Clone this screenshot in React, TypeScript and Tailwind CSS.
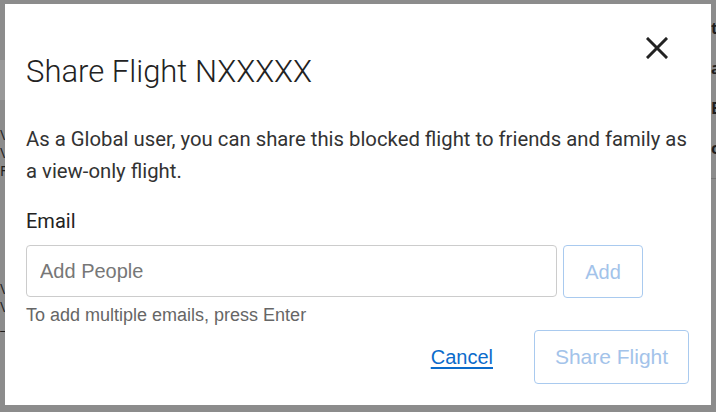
const roboto = { fontFamily: "Roboto, 'Liberation Sans', sans-serif" };
const helv = { fontFamily: "'Liberation Sans', Arial, sans-serif" };

function BackgroundPage() {
  return (
    <div className="flex h-[412px] w-[716px] bg-[#8c8c8c] text-[#1e1e1e]">
      <div className="flex w-[5px] flex-col overflow-hidden pt-[60px]">
        <div className="h-[40px] bg-[#999999]" />
        <div className="mt-[26px] text-[14px] leading-[18px]">\</div>
        <div className="text-[14px] leading-[18px]">\</div>
        <div className="text-[14px] leading-[18px]">F</div>
        <div className="mt-[100px] text-[14px] leading-[18px]">\</div>
        <div className="text-[14px] leading-[18px]">\</div>
        <div className="text-[14px] leading-[18px]">_</div>
      </div>
      <div className="flex-1" />
      <div className="flex w-[5px] flex-col overflow-hidden pt-[8px] text-[16px] font-bold leading-[40px]">
        <span>t</span>
        <span>a</span>
        <span>E</span>
        <span>c</span>
        <div className="mt-[10px] border-t border-[#777]" />
      </div>
    </div>
  );
}

function ShareFlightModal() {
  return (
    <div className="absolute left-[5px] top-[4px] h-[401px] w-[706px] bg-white px-[21px]">
      <div className="flex items-start justify-between">
        <h2 className="mt-[48px] text-[31px] font-light leading-[40px] text-[#222]" style={roboto}>
          Share Flight NXXXXX
        </h2>
        <button className="mr-[22px] mt-[33px] text-[#222]" aria-label="Close">
          <svg width="22" height="22" viewBox="0 0 22 22" fill="none" stroke="currentColor" strokeWidth="3" strokeLinecap="square">
            <path d="M2 2 L20 20 M20 2 L2 20" />
          </svg>
        </button>
      </div>

      <p className="mt-[31px] text-[20.3px] leading-[32px] text-[#333]" style={roboto}>
        As a Global user, you can share this blocked flight to friends and family as a view-only flight.
      </p>

      <label className="mt-[20px] block text-[20px] leading-[28px] text-[#222]" style={roboto}>
        Email
      </label>

      <div className="mt-[10px] flex gap-[6px]">
        <input
          placeholder="Add People"
          className="h-[52px] w-[531px] rounded-[4px] border border-[#cccccc] px-[13px] text-[20px] text-[#333] placeholder:text-[#777] outline-none"
          style={helv}
        />
        <button className="h-[53px] w-[80px] rounded-[4px] border border-[#a9caef] text-[20px] text-[#a3c3ea]" style={helv}>
          Add
        </button>
      </div>

      <p className="mt-[5px] text-[18px] leading-[24px] text-[#666]" style={helv}>
        To add multiple emails, press Enter
      </p>

      <div className="mt-[3px] flex items-center justify-end gap-[41px] pr-[1px]" style={helv}>
        <a href="#" className="text-[20px] text-[#0b6bcb] underline underline-offset-[3px]">
          Cancel
        </a>
        <button className="h-[54px] w-[155px] rounded-[4px] border border-[#a9caef] text-[21px] text-[#a3c3ea]">
          Share Flight
        </button>
      </div>
    </div>
  );
}

export default function App() {
  return (
    <div className="relative h-[412px] w-[716px] overflow-hidden">
      <BackgroundPage />
      <ShareFlightModal />
    </div>
  );
}
